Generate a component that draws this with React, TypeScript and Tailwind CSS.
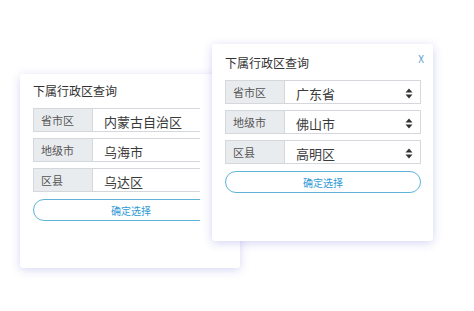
const font = { fontFamily: '"Noto Sans CJK SC", "Noto Sans", sans-serif' };

function Arrows() {
  return (
    <svg width="8" height="11" viewBox="0 0 8 11" className="shrink-0">
      <path d="M4 0.5 L7.5 4.5 L0.5 4.5 Z" fill="#333" />
      <path d="M4 10.5 L7.5 6.5 L0.5 6.5 Z" fill="#333" />
    </svg>
  );
}

function Row({ label, value, select }: { label: string; value: string; select?: boolean }) {
  return (
    <div className="flex h-[24px] border border-[#d4d7db] bg-white">
      <div className="flex w-[59px] shrink-0 items-center border-r border-[#d4d7db] bg-[#e9ecef] pl-[7px] text-[11px] text-[#555]">
        {label}
      </div>
      <div className="flex flex-1 items-center pl-[11px] pr-[7px] pt-[3px] text-[13px] text-[#3a3a3a]">
        <span className="flex-1">{value}</span>
        {select && <Arrows />}
      </div>
    </div>
  );
}

function Button() {
  return (
    <div className="flex h-[22px] items-center justify-center rounded-full border border-[#5fb3d9] text-[10px] text-[#2f9ad6]">
      确定选择
    </div>
  );
}

export default function App() {
  return (
    <div className="relative h-[311px] w-[474px] overflow-hidden bg-white" style={font}>
      {/* back card */}
      <div className="absolute left-[20px] top-[74px] h-[194px] w-[220px] rounded-[3px] bg-white shadow-[0_2px_10px_rgba(120,120,220,0.3)]">
        <div className="pl-[13px] pt-[8px] text-[12px] text-[#333]">下属行政区查询</div>
        <div className="ml-[13px] mt-[8px] w-[167px] overflow-hidden">
          <div className="flex w-[196px] flex-col gap-[6px]">
            <Row label="省市区" value="内蒙古自治区" />
            <Row label="地级市" value="乌海市" />
            <Row label="区县" value="乌达区" />
            <div className="mt-[1px]">
              <Button />
            </div>
          </div>
        </div>
      </div>

      {/* front card */}
      <div className="absolute left-[212px] top-[44px] h-[197px] w-[221px] rounded-[3px] bg-white shadow-[0_2px_10px_rgba(120,120,220,0.32)]">
        <div className="absolute right-[9px] top-[7px] text-[10px] text-[#5a9fd0]">X</div>
        <div className="pl-[13px] pt-[10px] text-[12px] text-[#333]">下属行政区查询</div>
        <div className="ml-[13px] mr-[12px] mt-[8px] flex flex-col gap-[6px]">
          <Row label="省市区" value="广东省" select />
          <Row label="地级市" value="佛山市" select />
          <Row label="区县" value="高明区" select />
          <div className="mt-[1px]">
            <Button />
          </div>
        </div>
      </div>
    </div>
  );
}
